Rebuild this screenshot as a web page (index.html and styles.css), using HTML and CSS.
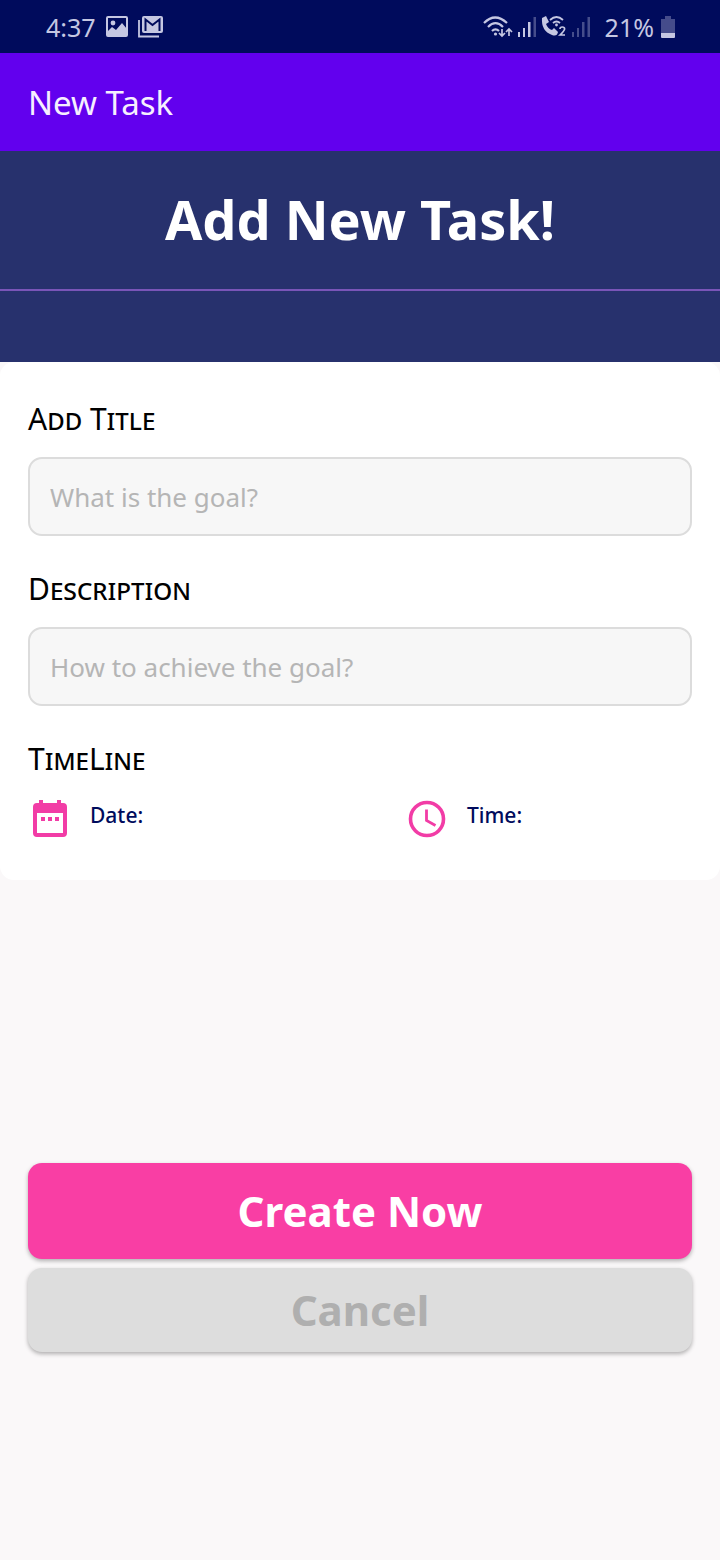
FILE: index.html
```html
<!DOCTYPE html>
<html lang="en">
<head>
<meta charset="utf-8">
<meta name="viewport" content="width=device-width, initial-scale=1">
<title>New Task</title>
<link rel="stylesheet" href="styles.css">
</head>
<body>
<div class="screen">
  <div class="status">
    <div class="status-left">
      <span>4:37</span>
      <svg class="icon-photo" width="22" height="22" viewBox="0 0 22 22"><rect x="1" y="1" width="20" height="19" rx="1" fill="none" stroke="currentColor" stroke-width="2"/><circle cx="7" cy="7" r="2.4" fill="currentColor"/><path d="M2 15l4-4 4 3 6-7 5 6v7H2z" fill="currentColor"/></svg>
      <svg width="26" height="22" viewBox="0 0 26 22"><path d="M1 4v16.500h20" fill="none" stroke="currentColor" stroke-width="1.800"/><rect x="4" y="0" width="21" height="17" rx="2" fill="currentColor"/><path d="M7.500 15V3.500l7 5.500 7-5.500V15" fill="none" stroke="#000b5c" stroke-width="2"/></svg>
    </div>
    <div class="status-right">
      <svg width="30" height="24" viewBox="0 0 30 24" fill="none" stroke="currentColor" stroke-width="2.200"><path d="M1 8q11-11 23 0M5 12q7.500-7.500 15 0M9 16q3.500-3.500 7 0"/><circle cx="12.500" cy="19" r="1.600" fill="currentColor" stroke="none"/><g stroke-width="1.700"><path d="M19 14v7m-3-3l3 3 3-3M26 21v-7m-3 3l3-3 3 3"/></g></svg>
      <svg class="icon-signal" width="18" height="20" viewBox="0 0 18 20" fill="currentColor"><path d="M0 15h2v5H0zM5 11h2v9H5zM10 5h2.500v15H10z"/><path opacity=".35" d="M15.500 0H18v20h-2.500z"/></svg>
      <svg width="26" height="22" viewBox="0 0 26 22"><path d="M1 2l4-2 3 6-3 2q2 5 6 6l2-2 4 4q-1 5-6 3Q0 15 1 2z" fill="currentColor"/><path d="M9 4q6.500-6 13 0M12 7q3.500-3 7 0" fill="none" stroke="currentColor" stroke-width="1.800"/><circle cx="15.500" cy="9" r="1.400" fill="currentColor"/><path d="M19 13q0-2 2.300-2t2.300 2q0 1.500-4.600 6h5" fill="none" stroke="currentColor" stroke-width="1.700"/></svg>
      <svg class="icon-signal dim" width="18" height="20" viewBox="0 0 18 20" fill="currentColor"><path d="M0 15h2v5H0zM5 11h2v9H5zM10 5h2.500v15H10zM15.500 0H18v20h-2.500z"/></svg>
      <span class="percent">21%</span>
      <svg width="14" height="22" viewBox="0 0 14 22"><path opacity=".35" d="M0 3h4V0h6v3h4v14H0z" fill="currentColor"/><path d="M0 17h14v4q0 1-1 1H1q-1 0-1-1z" fill="currentColor"/></svg>
    </div>
  </div>
  <header class="appbar">New Task</header>
  <div class="hero"><h1>Add New Task!</h1></div>
  <form class="form">
    <div class="card">
      <label class="label" for="title">Add Title</label>
      <input class="field" id="title" type="text" placeholder="What is the goal?">
      <label class="label" for="description">Description</label>
      <input class="field" id="description" type="text" placeholder="How to achieve the goal?">
      <div class="label">TimeLine</div>
      <div class="timeline">
        <button class="pick" type="button">
          <svg width="44" height="44" viewBox="0 0 44 44"><path fill="currentColor" fill-rule="evenodd" d="M11 3h4v3h14V3h4v3h2q4 0 4 4v26q0 4-4 4H9q-4 0-4-4V10q0-4 4-4h2zM9 16v20h26V16zM13 20h4v4h-4zM20 20h4v4h-4zM27 20h4v4h-4z"/></svg>
          <span>Date:</span>
        </button>
        <button class="pick" type="button">
          <svg width="44" height="44" viewBox="0 0 44 44" fill="none" stroke="currentColor"><circle cx="22" cy="22" r="16.500" stroke-width="3.600"/><path d="M21.500 12.500v11l9 5" stroke-width="2.800"/></svg>
          <span>Time:</span>
        </button>
      </div>
    </div>
    <div class="actions">
      <button class="btn primary" type="submit">Create Now</button>
      <button class="btn cancel" type="button">Cancel</button>
    </div>
  </form>
</div>
</body>
</html>
```
FILE: styles.css
```css
* {
  box-sizing: border-box;
}

body {
  margin: 0;
  background: #faf8f9;
  font-family: "Noto Sans", sans-serif;
}

button,
input {
  font-family: inherit;
}

svg {
  display: block;
  flex: none;
}

.screen {
  display: flex;
  flex-direction: column;
  min-height: 100vh;
}

.status {
  display: flex;
  justify-content: space-between;
  align-items: center;
  height: 53px;
  padding: 0 45px 0 46px;
  background: #000b5c;
  color: #c5c7e2;
  font-size: 25px;
}

.status-left,
.status-right {
  display: flex;
  align-items: center;
}

.icon-photo {
  margin: 0 10px;
}

.icon-signal {
  margin: 0 5px;
}

.dim {
  opacity: 0.35;
}

.percent {
  margin: 0 7px 0 10px;
}

.appbar {
  padding: 26px 28px 24px;
  background: #6200ee;
  color: #f6efff;
  font-size: 33px;
  line-height: 48px;
}

.hero {
  height: 211px;
  background: #27316d;
}

.hero h1 {
  margin: 0;
  padding: 32px 16px 34px;
  border-bottom: 2px solid #7a55b8;
  color: #fff;
  font-size: 54px;
  line-height: 72px;
  font-weight: 700;
  text-align: center;
}

.form {
  display: flex;
  flex: 1;
  flex-direction: column;
}

.card {
  padding: 37px 28px 39px;
  border-radius: 14px;
  background: #fff;
}

.label {
  display: block;
  margin-bottom: 18px;
  color: #000;
  font-size: 30px;
  line-height: 40px;
  font-variant: small-caps;
}

.field {
  display: block;
  width: 100%;
  height: 79px;
  margin-bottom: 33px;
  padding: 0 20px;
  border: 2px solid #dcdcdc;
  border-radius: 14px;
  background: #f7f7f7;
  color: #000;
  font-size: 26px;
}

.field::placeholder {
  color: #b5b5b5;
  opacity: 1;
}

.timeline {
  display: grid;
  grid-template-columns: 377fr 287fr;
}

.pick {
  display: flex;
  align-items: center;
  gap: 18px;
  padding: 0;
  border: 0;
  background: none;
  color: #f23ca6;
}

.pick span {
  padding-bottom: 8px;
  color: #000b5c;
  font-size: 21px;
  line-height: 30px;
  font-weight: 500;
}

.actions {
  display: flex;
  flex-direction: column;
  gap: 9px;
  margin-top: auto;
  padding: 0 28px 208px;
}

.btn {
  border: 0;
  border-radius: 14px;
  box-shadow: 0 2px 4px rgba(0, 0, 0, 0.3);
  font-size: 42px;
  line-height: 56px;
  font-weight: 700;
}

.primary {
  height: 96px;
  background: #f93ea4;
  color: #fff;
}

.cancel {
  height: 84px;
  background: #ddd;
  color: #afafaf;
}
```
